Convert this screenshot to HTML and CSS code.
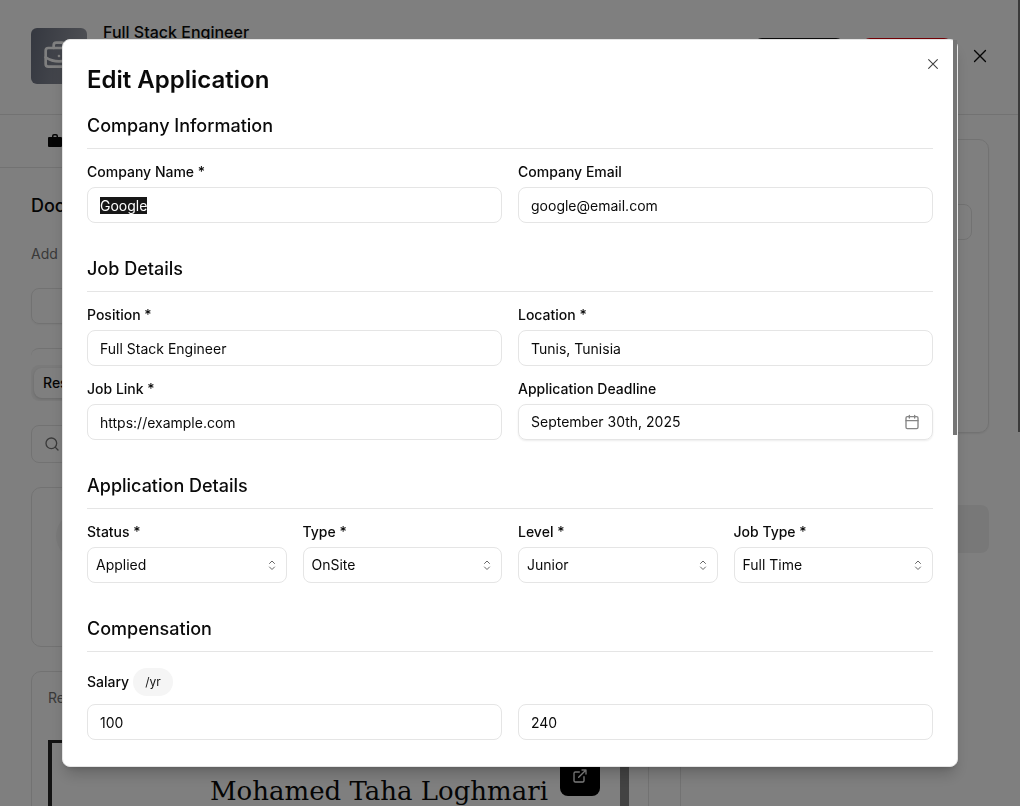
FILE: index.html
```html
<!DOCTYPE html>
<html lang="en">
<head>
<meta charset="utf-8">
<meta name="viewport" content="width=device-width, initial-scale=1">
<title>Edit Application</title>
<link rel="stylesheet" href="styles.css">
</head>
<body>
<div class="app">
  <header class="app-header">
    <div class="job-logo">
      <svg class="job-icon" viewBox="0 0 24 24"><path d="M12 12h.01M16 6V4a2 2 0 0 0-2-2h-4a2 2 0 0 0-2 2v2M22 13a18.15 18.15 0 0 1-20 0"/><rect x="2" y="6" width="20" height="14" rx="2"/></svg>
    </div>
    <h1 class="job-title">Full Stack Engineer</h1>
    <div class="header-actions">
      <button class="action" type="button" aria-label="Edit"></button>
      <button class="action action-danger" type="button" aria-label="Delete"></button>
      <button class="close" type="button" aria-label="Close"><svg class="close-icon-large" viewBox="0 0 15 15"><path d="M3.4 3.4l8.2 8.2M11.6 3.4l-8.2 8.2"/></svg></button>
    </div>
  </header>
  <div class="columns">
    <main class="main">
      <nav class="tabbar">
        <svg class="tab-icon" viewBox="0 0 16 16"><path d="M5 4V3a2 2 0 0 1 2-2h2a2 2 0 0 1 2 2v1h3a1 1 0 0 1 1 1v8a1 1 0 0 1-1 1H2a1 1 0 0 1-1-1V5a1 1 0 0 1 1-1zm1.500 0h3V3a.5.5 0 0 0-.5-.5H7a.5.5 0 0 0-.5.500z"/></svg>
      </nav>
      <div class="documents">
        <h2 class="documents-title">Documents</h2>
        <p class="documents-hint">Add</p>
        <div class="upload"></div>
        <div class="kinds">
          <div class="kind-list"><button class="kind" type="button">Res</button></div>
        </div>
        <div class="search">
          <svg class="search-icon" viewBox="0 0 24 24"><circle cx="11" cy="11" r="8"/><path d="M21 21l-4.300-4.300"/></svg>
        </div>
        <div class="panel"><div class="panel-mark"></div></div>
        <div class="document-card">
          <p class="document-name">Resume</p>
          <div class="preview">
            <p class="preview-name">Mohamed Taha Loghmari</p>
            <button class="open" type="button" aria-label="Open document"><svg class="open-icon" viewBox="0 0 24 24"><path d="M15 3h6v6M10 14L21 3M18 13v6a2 2 0 0 1-2 2H5a2 2 0 0 1-2-2V8a2 2 0 0 1 2-2h6"/></svg></button>
          </div>
        </div>
      </div>
    </main>
    <aside class="side">
      <div class="side-card"><div class="side-field"></div></div>
      <div class="side-block"></div>
    </aside>
  </div>
  <div class="page-thumb"></div>
</div>

<div class="overlay">
  <form class="dialog" role="dialog" aria-labelledby="dialog-title">
    <h2 class="dialog-title" id="dialog-title">Edit Application</h2>
    <div class="sections">
      <section class="section">
        <h3 class="section-title">Company Information</h3>
        <div class="grid">
          <div class="field"><label class="label" for="company">Company Name *</label><input class="input" id="company" type="text" value="Google"></div>
          <div class="field"><label class="label" for="email">Company Email</label><input class="input" id="email" type="text" value="google@email.com"></div>
        </div>
      </section>
      <section class="section">
        <h3 class="section-title">Job Details</h3>
        <div class="grid">
          <div class="field"><label class="label" for="position">Position *</label><input class="input" id="position" type="text" value="Full Stack Engineer"></div>
          <div class="field"><label class="label" for="location">Location *</label><input class="input" id="location" type="text" value="Tunis, Tunisia"></div>
          <div class="field"><label class="label" for="link">Job Link *</label><input class="input" id="link" type="text" value="https://example.com"></div>
          <div class="field"><label class="label" for="deadline">Application Deadline</label>
            <button class="date" id="deadline" type="button">September 30th, 2025<svg class="calendar" viewBox="0 0 24 24"><path d="M8 2v4M16 2v4M3 10h18"/><rect x="3" y="4" width="18" height="18" rx="2"/></svg></button>
          </div>
        </div>
      </section>
      <section class="section">
        <h3 class="section-title">Application Details</h3>
        <div class="grid grid-four">
          <div class="field"><label class="label" for="status">Status *</label><div class="select-box"><select class="select" id="status"><option>Applied</option></select><svg class="caret" viewBox="0 0 16 16"><path d="M5.500 6.500L8 4l2.500 2.500M5.500 10L8 12.500l2.500-2.500"/></svg></div></div>
          <div class="field"><label class="label" for="type">Type *</label><div class="select-box"><select class="select" id="type"><option>OnSite</option></select><svg class="caret" viewBox="0 0 16 16"><path d="M5.500 6.500L8 4l2.500 2.500M5.500 10L8 12.500l2.500-2.500"/></svg></div></div>
          <div class="field"><label class="label" for="level">Level *</label><div class="select-box"><select class="select" id="level"><option>Junior</option></select><svg class="caret" viewBox="0 0 16 16"><path d="M5.500 6.500L8 4l2.500 2.500M5.500 10L8 12.500l2.500-2.500"/></svg></div></div>
          <div class="field"><label class="label" for="jobtype">Job Type *</label><div class="select-box"><select class="select" id="jobtype"><option>Full Time</option></select><svg class="caret" viewBox="0 0 16 16"><path d="M5.500 6.500L8 4l2.500 2.500M5.500 10L8 12.500l2.500-2.500"/></svg></div></div>
        </div>
      </section>
      <section class="section">
        <h3 class="section-title">Compensation</h3>
        <div class="field">
          <div class="salary-head"><label class="label" for="salary-min">Salary</label><button class="period" type="button">/yr</button></div>
          <div class="grid">
            <input class="input" id="salary-min" type="text" value="100">
            <input class="input" type="text" value="240" aria-label="Maximum salary">
          </div>
        </div>
      </section>
    </div>
    <button class="dialog-close" type="button" aria-label="Close dialog"><svg class="close-icon" viewBox="0 0 15 15"><path d="M3.400 3.400l8.200 8.200M11.600 3.400l-8.200 8.200"/></svg></button>
    <div class="dialog-thumb"></div>
  </form>
</div>
<script src="main.js"></script>
</body>
</html>
```
FILE: styles.css
```css
* {
  box-sizing: border-box;
}

body {
  margin: 0;
  background: #fff;
  color: #0a0a0a;
  font-family: Inter, "Liberation Sans", sans-serif;
  font-size: 14px;
  line-height: 20px;
}

h1, h2, h3, p {
  margin: 0;
  font-weight: 400;
}

button, input, select {
  margin: 0;
  padding: 0;
  border: 0;
  background: none;
  color: inherit;
  font: inherit;
}

svg {
  display: block;
  flex: none;
  fill: none;
  stroke: currentColor;
  stroke-linecap: round;
  stroke-linejoin: round;
  stroke-width: 2;
}

/* Page behind the dialog */

.app {
  position: relative;
  height: 100vh;
  overflow: hidden;
}

.app-header {
  display: flex;
  align-items: center;
  gap: 16px;
  padding: 20px 30px 22px 31px;
  border-bottom: 1px solid #e5e5e5;
}

.job-logo {
  display: grid;
  place-items: center;
  width: 56px;
  height: 56px;
  border-radius: 6px;
  background: linear-gradient(100deg, #6a7080, #a0a3ac);
  color: #fff;
}

.job-icon {
  width: 32px;
  height: 32px;
}

.job-title {
  height: 72px;
  font-size: 16px;
  font-weight: 500;
  line-height: 24px;
}

.header-actions {
  display: flex;
  align-items: center;
  gap: 18px;
  margin-left: auto;
}

.action {
  width: 90px;
  height: 36px;
  border-radius: 8px;
  background: #171717;
}

.action-danger {
  background: #e7000b;
}

.close-icon-large {
  width: 20px;
  height: 20px;
  stroke-width: 1;
}

.columns {
  display: grid;
  grid-template-columns: 2fr 1fr;
}

.main {
  min-width: 0;
}

.tabbar {
  display: flex;
  align-items: center;
  height: 53px;
  padding-left: 47px;
  border-bottom: 1px solid #e5e5e5;
}

.tab-icon {
  width: 16px;
  height: 16px;
  fill: #0a0a0a;
  stroke: none;
}

.documents {
  display: flex;
  flex-direction: column;
  gap: 24px;
  padding: 24px 31px;
}

.documents-title {
  font-size: 18px;
  font-weight: 500;
  line-height: 28px;
}

.documents-hint,
.document-name {
  color: #737373;
}

.upload {
  height: 36px;
  border: 1px solid #e5e5e5;
  border-radius: 8px;
  box-shadow: 0 1px 2px rgba(0, 0, 0, 0.05);
}

.kinds {
  padding-top: 16px;
  border-top: 1px solid #e5e5e5;
  border-radius: 8px;
}

.kind-list {
  height: 36px;
  padding: 3px;
  border-radius: 8px;
  background: #f5f5f5;
}

.kind {
  height: 30px;
  padding: 0 9px;
  border-radius: 8px;
  background: #fff;
  font-weight: 500;
  box-shadow: 0 1px 3px rgba(0, 0, 0, 0.15);
}

.search {
  display: flex;
  align-items: center;
  height: 38px;
  padding-left: 12px;
  border: 1px solid #e5e5e5;
  border-radius: 8px;
}

.search-icon {
  width: 16px;
  height: 16px;
  color: #737373;
}

.panel {
  height: 160px;
  padding: 24px;
  border: 1px solid #e5e5e5;
  border-radius: 10px;
}

.panel-mark {
  width: 48px;
  height: 48px;
  border-radius: 24px;
  background: #f5f5f5;
}

.document-card {
  display: flex;
  flex-direction: column;
  gap: 32px;
  padding: 16px;
  border: 1px solid #e5e5e5;
  border-radius: 10px;
}

.preview {
  position: relative;
  height: 200px;
  margin-right: 3px;
  padding: 30px 0 0 86px;
  border-top: 3px solid #262626;
  border-right: 9px solid #868686;
  border-left: 4px solid #262626;
  text-align: center;
}

.preview-name {
  font-family: "DejaVu Serif", "Liberation Serif", serif;
  font-size: 26px;
  line-height: 36px;
  white-space: nowrap;
}

.open {
  position: absolute;
  top: 13px;
  right: 20px;
  display: grid;
  place-items: center;
  width: 40px;
  height: 40px;
  border-radius: 8px;
  background: #000;
  color: #fff;
}

.open-icon {
  width: 16px;
  height: 16px;
}

.side {
  display: flex;
  flex-direction: column;
  gap: 72px;
  padding: 24px 31px 0 24px;
  border-left: 1px solid #e5e5e5;
}

.side-card {
  height: 294px;
  padding: 64px 16px 0;
  border: 1px solid #e5e5e5;
  border-radius: 10px;
  box-shadow: 0 1px 2px rgba(0, 0, 0, 0.08);
}

.side-field {
  height: 36px;
  border: 1px solid #e5e5e5;
  border-radius: 8px;
}

.side-block {
  height: 48px;
  border-radius: 8px;
  background: #f1f1f1;
}

.page-thumb {
  position: absolute;
  top: 0;
  right: 0;
  width: 2px;
  height: 432px;
  background: #747474;
}

/* Dialog */

.overlay {
  position: fixed;
  inset: 0;
  display: grid;
  grid-template-columns: minmax(0, 896px);
  place-content: center;
  background: rgba(0, 0, 0, 0.5);
}

.dialog {
  position: relative;
  display: flex;
  flex-direction: column;
  gap: 16px;
  padding: 24px 24px 26px;
  border: 1px solid #e5e5e5;
  border-radius: 8px;
  background: #fff;
  box-shadow: 0 10px 15px -3px rgba(0, 0, 0, 0.2), 0 4px 6px -4px rgba(0, 0, 0, 0.2);
}

.dialog-title {
  font-size: 24px;
  font-variation-settings: "opsz" 24;
  font-weight: 600;
  line-height: 32px;
}

.dialog-close {
  position: absolute;
  top: 16px;
  right: 16px;
}

.close-icon {
  width: 16px;
  height: 16px;
  color: #404040;
  stroke-width: 1;
}

.dialog-thumb {
  position: absolute;
  top: 0;
  right: 0;
  width: 4px;
  height: 395px;
  background: #757575;
}

.sections {
  display: flex;
  flex-direction: column;
  gap: 32px;
}

.section {
  display: flex;
  flex-direction: column;
  gap: 16px;
}

.section-title {
  padding-bottom: 8px;
  border-bottom: 1px solid #e5e5e5;
  font-size: 18px;
  font-variation-settings: "opsz" 18;
  font-weight: 500;
  line-height: 28px;
}

.grid {
  display: grid;
  grid-template-columns: repeat(2, minmax(0, 1fr));
  gap: 16px;
}

.grid-four {
  grid-template-columns: repeat(4, minmax(0, 1fr));
}

.field {
  display: flex;
  flex-direction: column;
  gap: 8px;
}

.label {
  font-weight: 500;
  line-height: 14px;
}

.input,
.date,
.select {
  width: 100%;
  height: 36px;
  border: 1px solid #e5e5e5;
  border-radius: 8px;
  outline: none;
}

.input {
  padding: 4px 12px;
  line-height: normal;
}

.input::selection {
  background: #171717;
  color: #fff;
}

.date {
  display: flex;
  align-items: center;
  justify-content: space-between;
  padding: 0 12px;
  box-shadow: 0 1px 2px rgba(0, 0, 0, 0.08);
}

.calendar {
  width: 16px;
  height: 16px;
  color: #858585;
}

.select-box {
  display: grid;
  align-items: center;
}

.select,
.caret {
  grid-area: 1 / 1;
}

.select {
  padding: 0 8px;
  appearance: none;
}

.caret {
  justify-self: end;
  width: 16px;
  height: 16px;
  margin-right: 7px;
  color: #666;
  stroke-width: 1;
  pointer-events: none;
}

.salary-head {
  display: flex;
  align-items: center;
  gap: 4px;
}

.period {
  height: 28px;
  padding: 0 12px;
  border-radius: 14px;
  background: #f5f5f5;
  color: #171717;
  font-size: 12px;
}
```
FILE: main.js
```js
const company = document.getElementById("company");
company.focus();
company.select();
```
